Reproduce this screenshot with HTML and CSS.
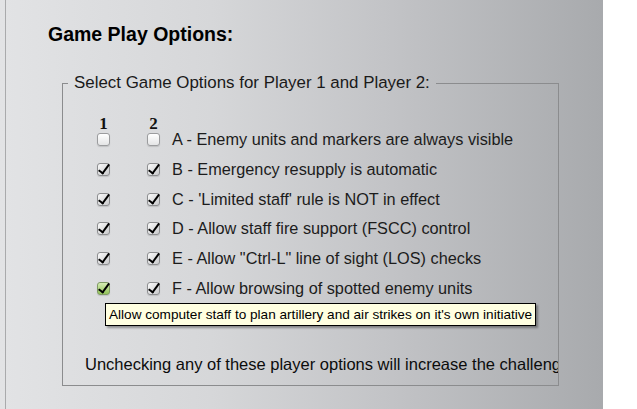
FILE: index.html
```html
<!DOCTYPE html>
<html lang="en">
<head>
    <meta charset="UTF-8">
    <meta name="viewport" content="width=device-width, initial-scale=1.0">
    <title>Game Play Options</title>
    <link rel="stylesheet" href="styles.css">
</head>
<body>

    <div class="panel">
        <div class="frame">
            <h2>Game Play Options:</h2>

            <fieldset class="options">
                <legend>Select Game Options for Player 1 and Player 2:</legend>

                <div class="player-head">
                    <span class="cell">1</span>
                    <span class="cell">2</span>
                </div>

                <div class="opt-row">
                    <span class="box"></span>
                    <span class="box"></span>
                    <span class="opt-text">A - Enemy units and markers are always visible</span>
                </div>
                <div class="opt-row">
                    <span class="box checked"></span>
                    <span class="box checked"></span>
                    <span class="opt-text">B - Emergency resupply is automatic</span>
                </div>
                <div class="opt-row">
                    <span class="box checked"></span>
                    <span class="box checked"></span>
                    <span class="opt-text">C - 'Limited staff' rule is NOT in effect</span>
                </div>
                <div class="opt-row">
                    <span class="box checked"></span>
                    <span class="box checked"></span>
                    <span class="opt-text">D - Allow staff fire support (FSCC) control</span>
                </div>
                <div class="opt-row">
                    <span class="box checked"></span>
                    <span class="box checked"></span>
                    <span class="opt-text">E - Allow "Ctrl-L" line of sight (LOS) checks</span>
                </div>
                <div class="opt-row">
                    <span class="box checked hover"></span>
                    <span class="box checked"></span>
                    <span class="opt-text">F - Allow browsing of spotted enemy units</span>
                    <!-- tooltip for the hovered player 1 box -->
                    <div class="tip">Allow computer staff to plan artillery and air strikes on it's own initiative</div>
                </div>

                <p class="note">Unchecking any of these player options will increase the challenge of the game.</p>
            </fieldset>
        </div>
    </div>

</body>
</html>
```

FILE: styles.css
```css
body {
    margin: 0;
    background-color: white;
    font-family: "Liberation Sans", Arial, sans-serif;
    color: #111;
}
.panel {
    width: 603px;
    height: 409px;
    padding-left: 5px;
    box-sizing: border-box;
    background: linear-gradient(to right, #e2e3e5 0%, #d6d7d9 35%, #c2c3c6 65%, #a8aaad 100%);
    overflow: hidden;
}
.frame {
    height: 100%;
    border-left: 1px solid #a9aaac;
}
h2 {
    margin: 0 0 0 42px;
    padding-top: 23px;
    font-size: 19.5px;
    line-height: 22px;
    font-weight: bold;
    color: #000;
}

/* group box */
.options {
    width: 497px;
    box-sizing: border-box;
    margin: 29px 0 0 56px;
    padding: 24px 0 10.7px 22px;
    border: 1px solid #8b8c8e;
    min-width: 0;
}
.options legend {
    margin-left: -17px;
    padding: 0 6px;
    font-size: 16.9px;
    line-height: 18px;
    color: #1a1a1a;
}

/* player column numbers */
.player-head {
    display: flex;
    gap: 37px;
    margin-left: 12px;
    height: 16px;
    margin-bottom: -7.4px;
    font-family: "Liberation Serif", "Times New Roman", serif;
    font-weight: bold;
    font-size: 17px;
    line-height: 16px;
    color: #111;
}
.player-head .cell {
    width: 13px;
    text-align: center;
}

.opt-row {
    position: relative;
    display: flex;
    align-items: center;
    height: 29.8px;
    margin-left: 12px;
}
.opt-row .box + .box {
    margin-left: 37px;
}
.opt-text {
    margin-left: 12px;
    font-size: 16.3px;
    color: #1c1c1c;
    white-space: nowrap;
}

/* checkbox look */
.box {
    flex: none;
    position: relative;
    width: 13px;
    height: 13px;
    box-sizing: border-box;
    border: 1px solid #9b9c9e;
    border-radius: 3px;
    background: linear-gradient(#ffffff, #e4e5e6);
    box-shadow: 0 1px 1px rgba(0, 0, 0, 0.12);
}
.box.checked {
    border-color: #8d8e90;
    background: linear-gradient(135deg, #fafafa, #c9cacc);
}
.box.checked::after {
    content: "";
    position: absolute;
    left: 3px;
    top: -2px;
    width: 4px;
    height: 10px;
    border-right: 2.6px solid #000;
    border-bottom: 2.6px solid #000;
    transform: rotate(36deg);
}
.box.hover {
    border-color: #7f9a64;
    background: linear-gradient(#d6edb4, #93c35a);
}

.tip {
    position: absolute;
    left: 8px;
    top: 100%;
    height: 23px;
    box-sizing: border-box;
    padding: 0 3px;
    background-color: #ffffe1;
    border: 1px solid #000;
    box-shadow: 2px 2px 2px rgba(0, 0, 0, 0.35);
    font-size: 13.6px;
    line-height: 21px;
    color: #000;
    white-space: nowrap;
}

.note {
    margin: 51px 0 0 0;
    font-size: 16.5px;
    line-height: 20px;
    color: #0c0c0c;
    white-space: nowrap;
    overflow: hidden;
}
```
